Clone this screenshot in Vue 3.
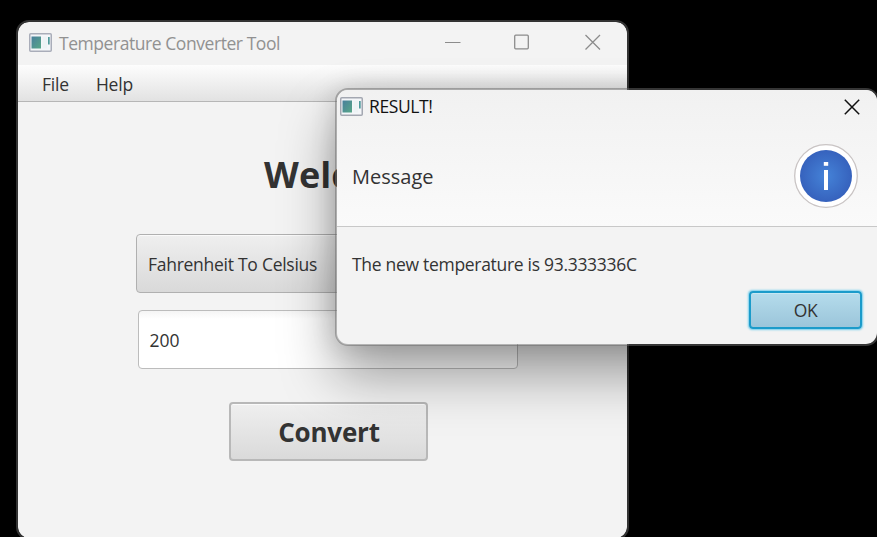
<script setup>
import { ref } from 'vue'

const menus = ['File', 'Help']
const conversion = ref('Fahrenheit To Celsius')
const amount = ref('200')
const result = ref('93.333336C')
</script>

<template>
  <div class="desktop">
    <section class="window main">
      <header class="titlebar">
        <svg class="app-icon" viewBox="0 0 23 19" width="23" height="19">
          <rect x=".75" y=".75" width="21.5" height="17.5" rx="1" fill="#f4f6f9" stroke="#a9adb9" stroke-width="1.5" />
          <rect x="2.5" y="3.5" width="9.5" height="12" fill="url(#tealMain)" />
          <rect x="13.5" y="3.5" width="4.5" height="12" fill="#edf3f5" />
          <rect x="19" y="4" width="1.7" height="7.5" fill="#509b9c" />
          <defs>
            <linearGradient id="tealMain" x1="0" y1="0" x2="1" y2="1">
              <stop offset="0" stop-color="#497f9c" />
              <stop offset="1" stop-color="#58a788" />
            </linearGradient>
          </defs>
        </svg>
        <h1 class="caption">Temperature Converter Tool</h1>
        <svg class="controls" viewBox="0 0 157 16" width="157" height="16" fill="none" stroke="#8c8c8c" stroke-width="1.3">
          <path d="M0 8.5H15.5" stroke-width="1" />
          <rect x="69.7" y="1.2" width="13.6" height="13.6" rx="1" />
          <path d="M140.500 1L155 15.500M155 1L140.500 15.500" />
        </svg>
      </header>
      <nav class="menubar">
        <span v-for="m in menus" :key="m" class="menu">{{ m }}</span>
      </nav>
      <main class="form">
        <h2 class="welcome">Welcome!</h2>
        <div class="combo"><span>{{ conversion }}</span></div>
        <div class="field"><span>{{ amount }}</span></div>
        <button class="convert">Convert</button>
      </main>
    </section>

    <section class="window dialog">
      <header class="dialog-head">
        <div class="dialog-title">
          <svg class="app-icon" viewBox="0 0 23 19" width="23" height="19">
            <rect x=".75" y=".75" width="21.5" height="17.5" rx="1" fill="#f4f6f9" stroke="#a3a7b1" stroke-width="1.5" />
            <rect x="2.5" y="3.5" width="9.5" height="12" fill="url(#tealMain)" />
            <rect x="13.5" y="3.5" width="4.5" height="12" fill="#edf3f5" />
            <rect x="19" y="4" width="1.7" height="7.5" fill="#509b9c" />
          </svg>
          <span class="dialog-caption">RESULT!</span>
          <svg class="close" viewBox="0 0 16 16" width="16" height="16" fill="none" stroke="#111" stroke-width="1.5">
            <path d="M.8 .8L15.200 15.200M15.200 .8L.8 15.200" />
          </svg>
        </div>
        <div class="message-row">
          <span class="message">Message</span>
          <svg class="info" viewBox="0 0 64 64" width="64" height="64">
            <defs>
              <radialGradient id="blue">
                <stop offset="0" stop-color="#4583d8" />
                <stop offset="1" stop-color="#3662bd" />
              </radialGradient>
            </defs>
            <circle cx="32" cy="32" r="31.3" fill="#fff" stroke="#c9c4c4" stroke-width="1.300" />
            <circle cx="32" cy="32" r="26" fill="url(#blue)" />
            <rect x="29.8" y="18" width="4.400" height="3.800" fill="#fff" />
            <rect x="30" y="26" width="4" height="20" fill="#fff" />
          </svg>
        </div>
      </header>
      <div class="dialog-body">
        <p class="result">The new temperature is {{ result }}</p>
        <button class="ok">OK</button>
      </div>
    </section>
  </div>
</template>

<style>
body {
  margin: 0;
  background: #000;
  overflow: hidden;
}
</style>

<style scoped>
.desktop {
  position: relative;
  width: 877px;
  height: 537px;
  overflow: hidden;
  background: #000;
  color: #333;
  font-family: "Open Sans", "Noto Sans", sans-serif;
  font-size: 17.5px;
  line-height: 24px;
}
.desktop * {
  box-sizing: border-box;
}
.window {
  position: absolute;
  overflow: hidden;
  background: #f3f3f3;
  background-clip: padding-box;
}
.main {
  left: 16px;
  top: 20px;
  width: 613px;
  height: 520px;
  border: 2px solid #333;
  border-radius: 13px;
}
.titlebar {
  display: flex;
  align-items: center;
  height: 43px;
  padding: 0 25px 3px 11px;
}
.app-icon {
  flex: none;
}
.caption {
  margin: 0 auto 0 7px;
  padding-top: 1px;
  font-size: 17.5px;
  font-weight: 400;
  letter-spacing: -0.44px;
  color: #919191;
}
.menubar {
  display: flex;
  gap: 27px;
  height: 37px;
  padding: 7px 24px 0;
  border-bottom: 1.5px solid #b6b6b6;
  background: linear-gradient(#fdfdfd, #e2e2e2);
}
.menu {
  letter-spacing: -0.2px;
}
.form {
  display: flex;
  flex-direction: column;
  align-items: center;
}
.welcome {
  margin: 48px 0 0 58px;
  font-size: 36px;
  line-height: 50px;
  font-weight: 700;
}
.combo,
.field {
  display: flex;
  align-items: center;
  border-radius: 4px;
}
.combo {
  width: 382px;
  height: 59px;
  margin: 34px 0 0 9px;
  padding-left: 11px;
  border: 1.5px solid #b0b0b0;
  background: linear-gradient(#efefef, #d9d9d9);
  box-shadow: inset 0 1px #fafafa;
  letter-spacing: -0.27px;
}
.field {
  width: 380px;
  height: 59px;
  margin: 17px 0 0 10px;
  padding-left: 11px;
  border: 1.5px solid #bcbcbc;
  background: linear-gradient(#f5f5f5, #fff 8px);
}
.convert {
  width: 199px;
  height: 59px;
  margin: 33px 0 0 11px;
  padding: 0 0 0 2px;
  border: 2px solid #b8b8b8;
  border-radius: 4px;
  background: linear-gradient(#efefef, #dadada);
  box-shadow: inset 0 1px #fafafa;
  color: #333;
  font: 700 26px/36px "Open Sans", sans-serif;
  letter-spacing: -0.2px;
}
.dialog {
  left: 335px;
  top: 88px;
  width: 544px;
  height: 258px;
  border: 2px solid rgba(105, 105, 105, 0.5);
  border-radius: 13px;
  box-shadow: 0 30px 54px rgba(0, 0, 0, 0.36), 0 0 26px rgba(0, 0, 0, 0.14);
}
.dialog-head {
  height: 137px;
  border-bottom: 1.5px solid #c8c8c8;
  background: linear-gradient(#f1f1f1, #fafafa);
}
.dialog-title {
  display: flex;
  align-items: center;
  height: 32px;
  padding: 0 17px 0 3px;
}
.dialog-caption {
  margin: 0 auto 0 6px;
  color: #111;
  letter-spacing: -0.4px;
}
.close {
  margin-top: 1px;
}
.message-row {
  display: flex;
  align-items: center;
  justify-content: space-between;
  padding: 22px 19px 0 15px;
}
.message {
  padding-top: 2px;
  font-size: 20px;
}
.info {
  flex: none;
}
.dialog-body {
  display: flex;
  flex-direction: column;
  padding: 25px 15px 0 15px;
}
.result {
  margin: 0;
  letter-spacing: -0.3px;
}
.ok {
  align-self: flex-end;
  width: 113px;
  height: 38px;
  margin-top: 15px;
  border: 2px solid #1b9bca;
  border-radius: 4px;
  background: linear-gradient(#b5dcec, #9bc5da);
  box-shadow: 0 0 2px 0.5px #72cdec, inset 0 1px #c6e7f3;
  color: #333;
  font: 17.5px/24px "Open Sans", sans-serif;
  letter-spacing: -0.3px;
}
</style>
